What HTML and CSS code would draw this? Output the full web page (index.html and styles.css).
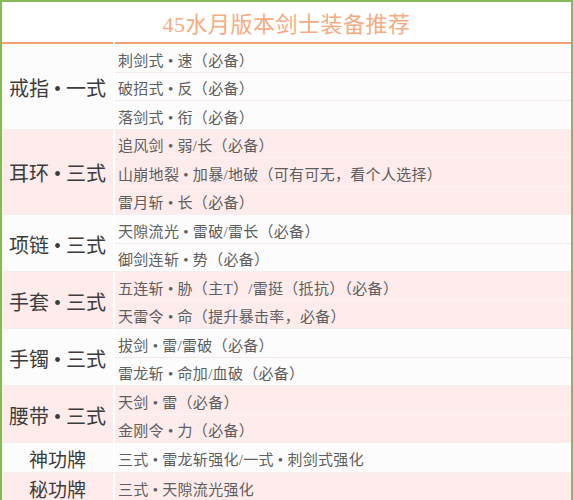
FILE: index.html
```html
<!DOCTYPE html>
<html lang="zh">
<head>
<meta charset="utf-8">
<link rel="stylesheet" href="styles.css">
</head>
<body>
<div class="sheet">
  <div class="title">45水月版本剑士装备推荐</div>
  <div class="group light first">
    <div class="label">戒指 • 一式</div>
    <div class="items">
      <div class="item">刺剑式 • 速（必备）</div>
      <div class="item">破招式 • 反（必备）</div>
      <div class="item">落剑式 • 衔（必备）</div>
    </div>
  </div>
  <div class="group pink">
    <div class="label">耳环 • 三式</div>
    <div class="items">
      <div class="item">追风剑 • 弱/长（必备）</div>
      <div class="item">山崩地裂 • 加暴/地破（可有可无，看个人选择）</div>
      <div class="item">雷月斩 • 长（必备）</div>
    </div>
  </div>
  <div class="group light">
    <div class="label">项链 • 三式</div>
    <div class="items">
      <div class="item">天隙流光 • 雷破/雷长（必备）</div>
      <div class="item">御剑连斩 • 势（必备）</div>
    </div>
  </div>
  <div class="group pink">
    <div class="label">手套 • 三式</div>
    <div class="items">
      <div class="item">五连斩 • 胁（主T）/雷挺（抵抗）（必备）</div>
      <div class="item">天雷令 • 命（提升暴击率，必备）</div>
    </div>
  </div>
  <div class="group light">
    <div class="label">手镯 • 三式</div>
    <div class="items">
      <div class="item">拔剑 • 雷/雷破（必备）</div>
      <div class="item">雷龙斩 • 命加/血破（必备）</div>
    </div>
  </div>
  <div class="group pink">
    <div class="label">腰带 • 三式</div>
    <div class="items">
      <div class="item">天剑 • 雷（必备）</div>
      <div class="item">金刚令 • 力（必备）</div>
    </div>
  </div>
  <div class="group light">
    <div class="label small">神功牌</div>
    <div class="items">
      <div class="item">三式 • 雷龙斩强化/一式 • 刺剑式强化</div>
    </div>
  </div>
  <div class="group pink">
    <div class="label small">秘功牌</div>
    <div class="items">
      <div class="item">三式 • 天隙流光强化</div>
    </div>
  </div>
</div>
</body>
</html>
```

FILE: styles.css
```css
html, body {
  margin: 0;
  padding: 0;
  background: #ffffff;
}
body {
  font-family: "Liberation Serif", "Noto Sans CJK SC", serif;
}
.sheet {
  width: 573px;
  box-sizing: border-box;
  border: 2px solid #86b957;
  border-bottom: none;
  background: #ffffff;
}
.title {
  height: 37px;
  padding-top: 3px;
  line-height: 40px;
  text-align: center;
  font-size: 22px;
  color: #f6ab82;
  letter-spacing: 0.5px;
}
.group {
  display: grid;
  grid-template-columns: 111px 1fr;
  column-gap: 2px;
  background: #ffffff;
}
.group + .group {
  border-top: 1px solid #f6eeee;
}
.group.first .label,
.group.first .items {
  border-top: 2px solid #f4a070;
}
.light .label, .light .items {
  background: #fcfcfd;
}
.pink .label, .pink .items {
  background: #fdeceb;
}
.label {
  display: flex;
  align-items: center;
  justify-content: center;
  padding-top: 2px;
  font-size: 20px;
  color: #3c3c3c;
  white-space: nowrap;
}
.label.small {
  font-size: 19px;
}
.items {
  display: flex;
  flex-direction: column;
}
.item {
  display: flex;
  align-items: center;
  box-sizing: border-box;
  height: 27.5px;
  padding-top: 3px;
  padding-left: 3px;
  font-size: 15px;
  color: #5e5e5e;
  letter-spacing: 0.3px;
  white-space: nowrap;
}
.item + .item {
  border-top: 1px solid #f3e8e7;
  height: 28.5px;
}
.pink .item + .item {
  border-top-color: #fbf4f3;
}
```
